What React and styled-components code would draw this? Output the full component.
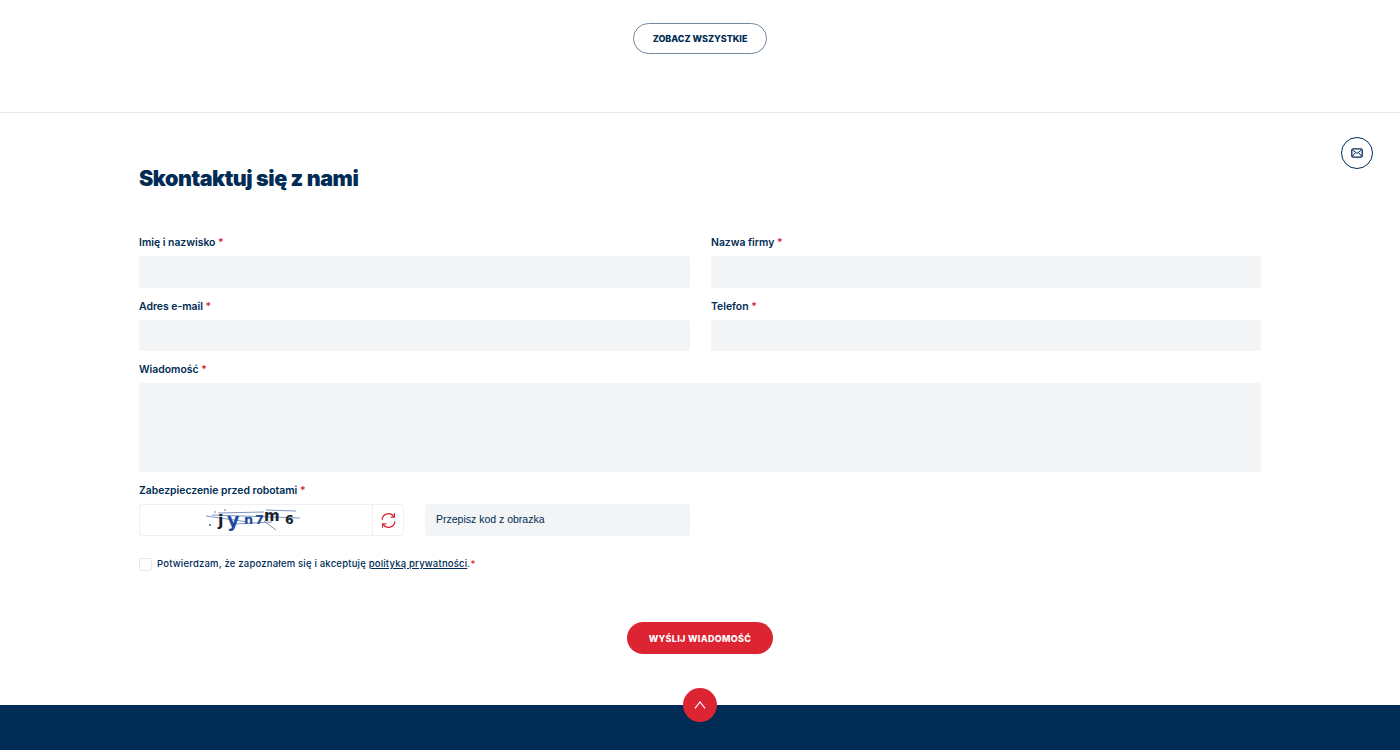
import React from "react";
import styled, { createGlobalStyle } from "styled-components";

const navy = "#002c55";
const red = "#dc2433";
const FONT = `"Inter", "Liberation Sans", sans-serif`;

const Global = createGlobalStyle`
  html, body { margin: 0; padding: 0; background: #fff; }
  body { font-family: ${FONT}; color: ${navy}; overflow: hidden; }
  * { box-sizing: border-box; }
`;

const Page = styled.div`
  position: relative;
  width: 1400px;
  height: 750px;
  overflow: hidden;
  display: flex;
  flex-direction: column;
`;

const TopBand = styled.section`
  height: 113px;
  padding-top: 23px;
  border-bottom: 1px solid #e6e8ea;
  display: flex;
  justify-content: center;
  align-items: flex-start;
`;

const OutlineButton = styled.a`
  width: 134px;
  height: 31px;
  border: 1.25px solid #6f879d;
  border-radius: 16px;
  display: flex;
  align-items: center;
  justify-content: center;
  font-size: 9px;
  font-weight: 800;
  letter-spacing: -0.02px;
  color: ${navy};
`;

const FloatMail = styled.a`
  position: absolute;
  left: 1341px;
  top: 137px;
  width: 32px;
  height: 32px;
  border: 1.5px solid ${navy};
  border-radius: 50%;
  display: flex;
  align-items: center;
  justify-content: center;
`;

const Contact = styled.section`
  flex: 1;
  padding: 52px 139px 0;
  display: flex;
  flex-direction: column;
`;

const Heading = styled.h2`
  margin: 0;
  height: 27px;
  font-size: 21.5px;
  line-height: 27px;
  font-weight: 900;
  letter-spacing: -0.45px;
  color: ${navy};
`;

const FormGrid = styled.form`
  margin-top: 43px;
  display: grid;
  grid-template-columns: 551px 550px;
  column-gap: 21px;
`;

const Field = styled.div`
  display: flex;
  flex-direction: column;
  grid-column: ${(p) => (p.$wide ? "1 / -1" : "auto")};
  margin-bottom: 11px;
`;

const Label = styled.label`
  height: 21px;
  line-height: 16px;
  font-size: 10.4px;
  font-weight: 600;
  color: ${navy};
`;

const Star = styled.span`
  color: ${red};
`;

const Input = styled.div`
  height: ${(p) => p.$h || 32}px;
  background: #f3f4f6;
  border-radius: 3px;
`;

const CaptchaRow = styled.div`
  display: grid;
  grid-template-columns: 551px;
  grid-column: 1 / -1;
`;

const CaptchaInner = styled.div`
  display: flex;
  gap: 21px;
  height: 32px;
`;

const CaptchaBox = styled.div`
  width: 265px;
  height: 32px;
  border: 1px solid #eff0f2;
  border-radius: 3px;
  display: flex;
  flex: none;
`;

const CaptchaImage = styled.div`
  flex: 1;
  display: flex;
  align-items: center;
  justify-content: center;
  padding-right: 4px;
`;

const Refresh = styled.button`
  width: 31px;
  flex: none;
  border: 0;
  border-left: 1px solid #eff0f2;
  background: transparent;
  padding: 0;
  display: flex;
  align-items: center;
  justify-content: center;
`;

const CodeInput = styled.div`
  flex: 1;
  background: #f3f4f6;
  border-radius: 3px;
  display: flex;
  align-items: center;
  padding: 0 0 2px 11px;
  font-family: "Liberation Sans", sans-serif;
  font-size: 10.5px;
  color: ${navy};
`;

const Consent = styled.div`
  grid-column: 1 / -1;
  margin-top: 22px;
  display: flex;
  align-items: center;
  gap: 5px;
  height: 13px;
  font-size: 9.5px;
  font-weight: 500;
  letter-spacing: 0.2px;
  color: ${navy};
`;

const ConsentText = styled.span`
  padding-bottom: 2px;
`;

const Check = styled.span`
  width: 13px;
  height: 13px;
  border: 1px solid #e6e8ea;
  border-radius: 2px;
  flex: none;
`;

const ConsentLink = styled.a`
  text-decoration: underline;
  font-weight: 500;
`;

const SubmitWrap = styled.div`
  margin-top: 51px;
  display: flex;
  justify-content: center;
`;

const Submit = styled.button`
  width: 146px;
  height: 32px;
  border: 0;
  border-radius: 16px;
  background: ${red};
  color: #fff;
  font-family: ${FONT};
  font-size: 9px;
  font-weight: 800;
  letter-spacing: 0.3px;
`;

const Footer = styled.footer`
  height: 45px;
  background: ${navy};
  flex: none;
`;

const ToTop = styled.a`
  position: absolute;
  left: 683px;
  top: 688px;
  width: 34px;
  height: 34px;
  border-radius: 50%;
  background: ${red};
  display: flex;
  align-items: center;
  justify-content: center;
`;

const CaptchaArt = () => (
  <svg width="100" height="26" viewBox="0 0 100 26" fill="none" aria-hidden="true">
    <g stroke="#7d95c4" strokeWidth="1">
      <path d="M2 9 L44 15" />
      <path d="M8 8 L96 11" />
      <path d="M14 6 L60 5" />
      <path d="M30 17 L68 15" />
      <path d="M62 3 L92 4" />
      <path d="M60 14 L72 23" stroke="#8a8f98" />
    </g>
    <g fontFamily="'DejaVu Sans', sans-serif" fontWeight="700">
      <text x="14" y="19" fontSize="16" fill="#1b1f2a">j</text>
      <text x="23" y="20" fontSize="19" fill="#1c4b9c">y</text>
      <text x="40" y="16.5" fontSize="13" fill="#1c4b9c">n</text>
      <text x="51" y="17" fontSize="13" fill="#1c4b9c">7</text>
      <text x="60" y="14" fontSize="15" fill="#1b1f2a">m</text>
      <text x="81" y="17" fontSize="12.5" fill="#1b1f2a">6</text>
    </g>
    <g fill="#1c4b9c">
      <circle cx="6" cy="18" r="0.9" />
      <circle cx="11" cy="5" r="0.7" />
      <circle cx="21" cy="3" r="0.7" />
      <circle cx="74" cy="7" r="0.7" />
    </g>
  </svg>
);

const Req = () => <Star> *</Star>;

export default function App() {
  return (
    <Page>
      <Global />
      <TopBand>
        <OutlineButton>ZOBACZ WSZYSTKIE</OutlineButton>
      </TopBand>
      <FloatMail aria-label="Kontakt">
        <svg width="12" height="10" viewBox="0 0 12 10" fill="none" stroke={navy} strokeWidth="1.3">
          <rect x="0.8" y="0.8" width="10.4" height="8.4" rx="1.4" />
          <path d="M1.4 1.8 L6 5.4 L10.6 1.8 M1.4 8.4 L4.4 4.6 M10.6 8.4 L7.6 4.6" strokeWidth="1" />
        </svg>
      </FloatMail>
      <Contact>
        <Heading>Skontaktuj się z nami</Heading>
        <FormGrid>
          <Field>
            <Label>Imię i nazwisko<Req /></Label>
            <Input />
          </Field>
          <Field>
            <Label>Nazwa firmy<Req /></Label>
            <Input />
          </Field>
          <Field>
            <Label>Adres e-mail<Req /></Label>
            <Input $h={31} />
          </Field>
          <Field>
            <Label>Telefon<Req /></Label>
            <Input $h={31} />
          </Field>
          <Field $wide>
            <Label>Wiadomość<Req /></Label>
            <Input $h={89} />
          </Field>
          <CaptchaRow>
            <Label>Zabezpieczenie przed robotami<Req /></Label>
            <CaptchaInner>
              <CaptchaBox>
                <CaptchaImage>
                  <CaptchaArt />
                </CaptchaImage>
                <Refresh aria-label="Odśwież">
                  <svg width="17" height="17" viewBox="0 0 16 16" fill="none" stroke={red} strokeWidth="1.1" strokeLinecap="round" strokeLinejoin="round">
                    <path d="M2 7 A6 6 0 0 1 13 4.4" />
                    <path d="M13.6 1.6 V4.8 H10.4" />
                    <path d="M14 9 A6 6 0 0 1 3 11.6" />
                    <path d="M2.4 14.4 V11.2 H5.6" />
                  </svg>
                </Refresh>
              </CaptchaBox>
              <CodeInput>Przepisz kod z obrazka</CodeInput>
            </CaptchaInner>
          </CaptchaRow>
          <Consent>
            <Check />
            <ConsentText>
              Potwierdzam, że zapoznałem się i akceptuję <ConsentLink>polityką prywatności</ConsentLink>.<Star>*</Star>
            </ConsentText>
          </Consent>
        </FormGrid>
        <SubmitWrap>
          <Submit>WYŚLIJ WIADOMOŚĆ</Submit>
        </SubmitWrap>
      </Contact>
      <Footer />
      <ToTop aria-label="Do góry">
        <svg width="12" height="8" viewBox="0 0 12 8" fill="none" stroke="#fff" strokeWidth="1.1">
          <path d="M1 7.4 L6 1 L11 7.4" />
        </svg>
      </ToTop>
    </Page>
  );
}
